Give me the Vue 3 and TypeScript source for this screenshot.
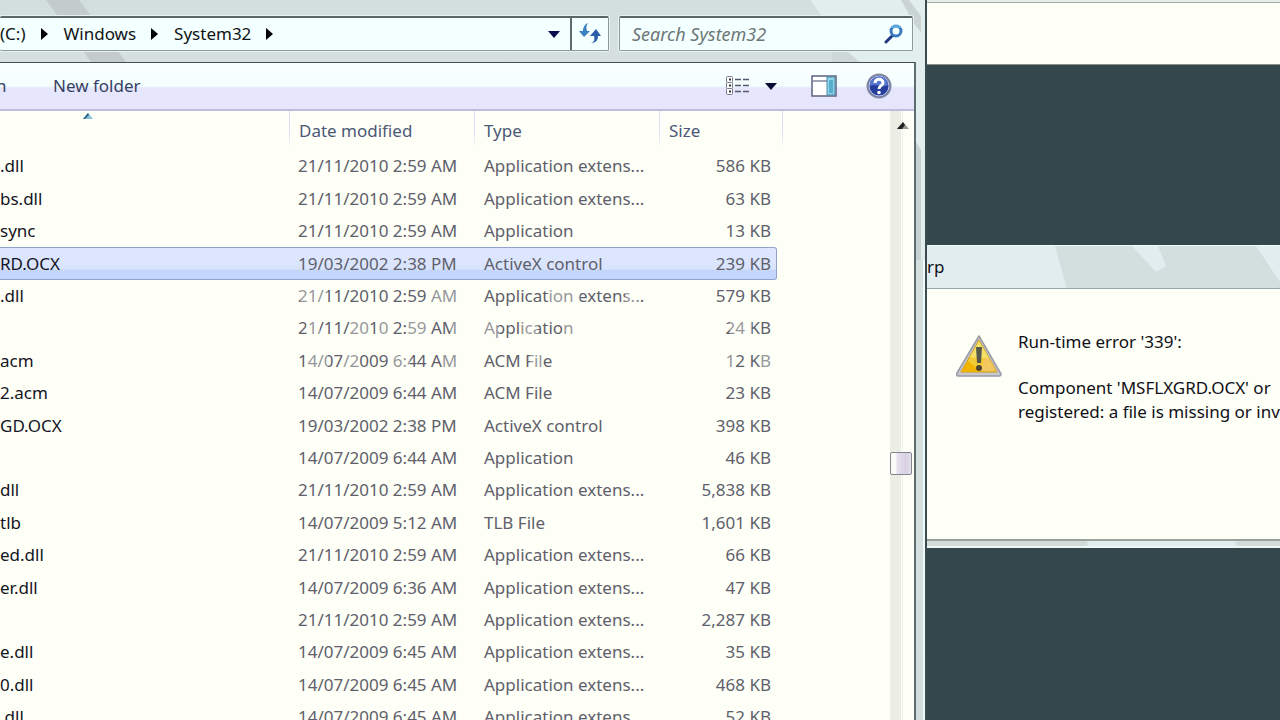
<script setup lang="ts">
interface FileRow {
  name: string
  date: string
  type: string
  size: string
  selected?: boolean
}

const ext = 'Application extens...'
const files: FileRow[] = [
  { name: '.dll', date: '21/11/2010 2:59 AM', type: ext, size: '586 KB' },
  { name: 'bs.dll', date: '21/11/2010 2:59 AM', type: ext, size: '63 KB' },
  { name: 'sync', date: '21/11/2010 2:59 AM', type: 'Application', size: '13 KB' },
  { name: 'RD.OCX', date: '19/03/2002 2:38 PM', type: 'ActiveX control', size: '239 KB', selected: true },
  { name: '.dll', date: '21/11/2010 2:59 AM', type: ext, size: '579 KB' },
  { name: '', date: '21/11/2010 2:59 AM', type: 'Application', size: '24 KB' },
  { name: 'acm', date: '14/07/2009 6:44 AM', type: 'ACM File', size: '12 KB' },
  { name: '2.acm', date: '14/07/2009 6:44 AM', type: 'ACM File', size: '23 KB' },
  { name: 'GD.OCX', date: '19/03/2002 2:38 PM', type: 'ActiveX control', size: '398 KB' },
  { name: '', date: '14/07/2009 6:44 AM', type: 'Application', size: '46 KB' },
  { name: 'dll', date: '21/11/2010 2:59 AM', type: ext, size: '5,838 KB' },
  { name: 'tlb', date: '14/07/2009 5:12 AM', type: 'TLB File', size: '1,601 KB' },
  { name: 'ed.dll', date: '21/11/2010 2:59 AM', type: ext, size: '66 KB' },
  { name: 'er.dll', date: '14/07/2009 6:36 AM', type: ext, size: '47 KB' },
  { name: '', date: '21/11/2010 2:59 AM', type: ext, size: '2,287 KB' },
  { name: 'e.dll', date: '14/07/2009 6:45 AM', type: ext, size: '35 KB' },
  { name: '0.dll', date: '14/07/2009 6:45 AM', type: ext, size: '468 KB' },
  { name: '.dll', date: '14/07/2009 6:45 AM', type: ext, size: '52 KB' },
]
</script>

<template>
  <div class="desktop">
    <main class="explorer">
      <svg class="glass left" width="180" height="62" aria-hidden="true">
        <path d="M46 0H79L126 62H91Z" fill="#c3cccb" />
      </svg>
      <svg class="glass right" width="115" height="260" aria-hidden="true">
        <path d="M0 0H115V260H103V62H50L34 51H22V16H12Z" fill="#e1eeed" />
        <path d="M91 0H99L111 16V32L105 25Z" fill="#c9d4d3" />
        <path d="M22 51H37L49 62H22Z" fill="#cdd8d7" />
        <path d="M103 137L111 150V260H103Z" fill="#c6d1d1" />
      </svg>

      <div class="nav">
        <div class="address">
          <nav class="crumbs" aria-label="Address">
            <a href="#">(C:)</a>
            <svg width="8" height="12"><path d="M0 0L7 6L0 12Z" fill="#000" /></svg>
            <a href="#">Windows</a>
            <svg width="8" height="12"><path d="M0 0L7 6L0 12Z" fill="#000" /></svg>
            <a href="#">System32</a>
            <svg width="8" height="12"><path d="M0 0L7 6L0 12Z" fill="#000" /></svg>
          </nav>
          <button class="icon-btn drop" aria-label="Previous locations">
            <svg width="12" height="7"><path d="M0 0H12L6 7Z" fill="#0a0a50" /></svg>
          </button>
          <button class="icon-btn refresh" aria-label="Refresh">
            <svg width="22" height="22" viewBox="0 0 22 22">
              <path d="M9 0C6 1 4 4 4 8H0L5 14L11 8H8C7 5 7 3 9 0Z" fill="#3b7fc4" />
              <path d="M12 20C15 19 16 17 15 13H11L17 6L22 13H19C19 17 17 20 12 20Z" fill="#2b5da8" />
            </svg>
          </button>
        </div>
        <div class="search">
          <input type="text" placeholder="Search System32" aria-label="Search System32" />
          <svg width="20" height="20" viewBox="0 0 20 20" aria-hidden="true">
            <path d="M8 12L2 18" stroke="#1e3a86" stroke-width="3" stroke-linecap="round" />
            <circle cx="12" cy="7" r="5" fill="#f4ffff" stroke="#3a78c0" stroke-width="3" />
            <path d="M8 4A5 5 0 0 1 16 4" fill="none" stroke="#5bb0dc" stroke-width="2" />
          </svg>
        </div>
      </div>

      <div class="frame">
        <div class="toolbar">
          <span class="cut">n</span>
          <button class="text-btn">New folder</button>
          <span class="grow"></span>
          <button class="icon-btn views" aria-label="Change your view">
            <svg width="24" height="20" viewBox="0 0 24 20">
              <g fill="#fff" stroke="#77798f">
                <rect x="1.500" y="0.500" width="6" height="6" rx="1" />
                <rect x="1.500" y="6.500" width="6" height="6" rx="1" />
                <rect x="1.500" y="12.500" width="6" height="6" rx="1" />
              </g>
              <path d="M4 3.500H6M4 9.500H6M4 15.500H6" stroke="#333" stroke-width="2" />
              <path d="M10 3.500H16M18 3.500H24M10 9.500H16M18 9.500H24M10 15.500H16M18 15.500H24" stroke="#55586c" stroke-width="1.500" />
            </svg>
          </button>
          <button class="icon-btn more" aria-label="More options">
            <svg width="12" height="7"><path d="M0 0H12L6 7Z" fill="#0b0b35" /></svg>
          </button>
          <button class="icon-btn pane" aria-label="Show the preview pane">
            <svg width="26" height="22" viewBox="0 0 26 22">
              <rect x="1" y="1" width="24" height="20" fill="#fff" stroke="#5b6280" stroke-width="1.500" />
              <path d="M1 6H16" stroke="#8084a0" stroke-width="1.500" />
              <rect x="16" y="2" width="8" height="18" fill="#8fd3ea" stroke="#4a8ba8" />
              <rect x="18" y="5" width="4" height="13" fill="#55aecb" />
            </svg>
          </button>
          <button class="icon-btn" aria-label="Get help">
            <svg width="26" height="26" viewBox="0 0 26 26">
              <circle cx="13" cy="13" r="11.500" fill="#263f9c" stroke="#8288a2" stroke-width="2" />
              <circle cx="13" cy="13" r="10" fill="none" stroke="#c5cdee" />
              <path d="M4 13A9 9 0 0 1 22 12C16 15 10 10 4 13Z" fill="#5878cf" />
              <path d="M9 10C9 5 17 5 17 10C17 13 13 12 13 16" fill="none" stroke="#fff" stroke-width="3" />
              <circle cx="13" cy="19.500" r="1.800" fill="#fff" />
            </svg>
          </button>
        </div>

        <div class="content">
          <div class="list">
            <svg class="sort" width="10" height="6" aria-hidden="true">
              <path d="M0 6L5 0L10 6Z" fill="#8cc3dc" /><path d="M0 6L5 0L6 2L2 6Z" fill="#2e5f84" />
            </svg>
            <table>
              <colgroup><col class="c-name" /><col class="c-mid" /><col class="c-mid" /><col class="c-size" /></colgroup>
              <thead>
                <tr>
                  <th aria-label="Name"></th>
                  <th>Date modified</th>
                  <th>Type</th>
                  <th class="last">Size</th>
                </tr>
              </thead>
              <tbody>
                <tr v-for="(f, i) in files" :key="i" :class="{ selected: f.selected }">
                  <td class="name">{{ f.name }}</td>
                  <td>{{ f.date }}</td>
                  <td>{{ f.type }}</td>
                  <td class="size">{{ f.size }}</td>
                </tr>
              </tbody>
            </table>
            <svg class="watermark" width="500" height="90" aria-hidden="true">
              <g fill="#fefff6" fill-opacity="0.35">
                <path d="M20 0H48V24H20ZM150 0H182V28H150ZM270 0H300V28H270ZM345 0H358V28H345Z" />
                <path d="M26 34H40V58H26ZM70 34H90V58H70ZM98 34H110V58H98ZM128 34H148V58H128ZM170 34H190V58H170ZM203 34H218V58H203ZM242 34H258V58H242ZM282 34H306V58H282ZM450 34H472V58H450Z" />
                <path d="M26 64H48V90H26ZM62 64H78V90H62ZM110 64H130V90H110ZM162 64H190V90H162ZM250 64H262V90H250ZM446 64H456V90H446ZM480 64H494V90H480Z" />
              </g>
            </svg>
          </div>
          <div class="scroll">
            <svg class="up" width="12" height="7" aria-hidden="true">
              <path d="M0 7L6 0L12 7Z" fill="#99998f" /><path d="M0 7L6 0L8 3L5 7Z" fill="#222" />
            </svg>
            <div class="thumb"></div>
          </div>
        </div>
      </div>
    </main>

    <aside class="behind">
      <div class="panel"></div>
      <section class="dialog">
        <header>
          <svg class="streaks" width="353" height="43" aria-hidden="true">
            <path d="M128 0H205L229 26L239 20L231 0H329L353 36V43H140Z" fill="#d3dfde" />
          </svg>
          <span>rp</span>
        </header>
        <div class="message">
          <svg width="48" height="44" viewBox="0 0 48 44" aria-hidden="true">
            <path d="M24 2L46 40Q46 42 44 42H3Q1 42 2 39Z" fill="#c8c8ce" stroke="#9a9aa6" stroke-width="1.500" stroke-linejoin="round" />
            <path d="M24 6L42 38H6Z" fill="#f2ca35" stroke="#c79a1c" />
            <path d="M24 7L15 23Q26 25 34 24Z" fill="#f5e06a" />
            <path d="M13 27L6 38H26Z" fill="#f0b400" />
            <path d="M30 25L25 37H41L34 24Z" fill="#f4c860" />
            <path d="M21 13H27L26 29H22Z" fill="#56584a" />
            <circle cx="24" cy="34" r="3" fill="#4c4630" />
          </svg>
          <div class="text">
            <p>Run-time error '339':</p>
            <p>Component 'MSFLXGRD.OCX' or<br />registered: a file is missing or inv</p>
          </div>
        </div>
        <footer></footer>
      </section>
    </aside>
  </div>
</template>

<style>
body {
  margin: 0;
}
</style>

<style scoped>
.desktop {
  display: grid;
  grid-template-columns: minmax(0, 927fr) minmax(0, 353fr);
  height: 100vh;
  overflow: hidden;
  background: #34474c;
  font-family: "Noto Sans", "Open Sans", sans-serif;
  font-size: 17px;
  line-height: 24px;
  color: #101018;
}
button {
  font: inherit;
  color: inherit;
  background: none;
  border: 0;
  padding: 0;
}
svg {
  display: block;
  flex: none;
}
.explorer {
  position: relative;
  display: flex;
  flex-direction: column;
  min-height: 0;
  box-sizing: border-box;
  padding: 16px 9px 0 0;
  border-right: 2px solid #3b4b4f;
  background: linear-gradient(#d2dedc, #d6e1df 60px, #d2dedd);
  box-shadow: inset -2px 0 #effbfb;
}
.glass {
  position: absolute;
  top: 0;
}
.glass.left {
  left: 0;
}
.glass.right {
  right: 0;
}
.nav {
  position: relative;
  display: flex;
  gap: 10px;
  height: 36px;
  margin-right: 3px;
}
.address,
.search {
  display: flex;
  box-sizing: border-box;
  height: 35px;
  border: 1px solid #8c9998;
  border-top: 2px solid #5a6565;
  border-radius: 2px;
  background: #f4ffff;
  box-shadow: 0 0 0 1px #e6f1f0;
}
.address {
  flex: 1;
  border-left: 0;
}
.search {
  flex: 0 0 32%;
  align-items: center;
  padding: 0 8px 0 12px;
}
.search input {
  flex: 1;
  min-width: 0;
  padding: 0;
  border: 0;
  background: none;
  font: italic 18px/24px "Noto Sans", "Open Sans", sans-serif;
}
.search input::placeholder {
  color: #6c7778;
  opacity: 1;
}
.crumbs {
  display: flex;
  flex: 1;
  align-items: center;
  gap: 15px;
}
.crumbs a {
  color: #101414;
  text-decoration: none;
}
.icon-btn {
  display: flex;
  align-items: center;
  justify-content: center;
}
.drop {
  width: 32px;
}
.refresh {
  width: 38px;
  border-left: 2px solid #5f6a6c;
}
.frame {
  position: relative;
  display: flex;
  flex-direction: column;
  flex: 1;
  min-height: 0;
  margin-top: 10px;
  border-top: 1px solid #46504f;
  border-right: 2px solid #5d6c6e;
  background: #fefff6;
}
.toolbar {
  display: flex;
  align-items: center;
  flex: none;
  height: 46px;
  padding-right: 22px;
  border-bottom: 2px solid #bdbedb;
  background: linear-gradient(#fbffff, #f3feff 50%, #e6e7fd 54%, #e5e5fc);
  color: #36405f;
}
.cut {
  width: 53px;
  text-indent: -4px;
}
.grow {
  flex: 1;
}
.more {
  margin: 0 34px 0 16px;
}
.pane {
  margin-right: 29px;
}
.content {
  display: flex;
  flex: 1;
  min-height: 0;
}
.list {
  position: relative;
  flex: 1;
  min-width: 0;
  overflow: hidden;
}
.sort {
  position: absolute;
  left: 83px;
  top: 2px;
}
.watermark {
  position: absolute;
  left: 280px;
  top: 173px;
  pointer-events: none;
}
table {
  width: 777px;
  table-layout: fixed;
  border-spacing: 0;
}
.c-name {
  width: 289px;
}
.c-mid {
  width: 185px;
}
.c-size {
  width: 118px;
}
th {
  position: relative;
  height: 39px;
  padding: 0 0 0 10px;
  font-weight: 400;
  text-align: left;
  color: #4c5878;
}
th + th::before,
th.last::after {
  content: "";
  position: absolute;
  top: 0;
  left: 0;
  width: 1px;
  height: 34px;
  background: linear-gradient(#e3d8f8 60%, #f6f6fb);
}
th.last::after {
  left: 123px;
}
td {
  height: 32px;
  padding: 0 0 0 9px;
  box-sizing: border-box;
  white-space: nowrap;
  color: #5f606c;
}
td:nth-child(3) {
  padding-left: 10px;
}
tr:nth-child(5n + 2) td,
tr:nth-child(5n + 4) td {
  height: 33px;
}
td.name {
  padding-left: 0;
  color: #14141f;
}
td.size {
  padding: 0 6px 0 0;
  text-align: right;
}
.selected td {
  border: 1px solid #8fa2cd;
  border-width: 1px 0;
  background: linear-gradient(#dfe7fe, #d9e4fd 68%, #c5d6fb 72%, #c3d5fb);
}
.selected td.size {
  padding-right: 5px;
  border-right-width: 1px;
  border-radius: 0 3px 3px 0;
}
.scroll {
  position: relative;
  flex: none;
  width: 24px;
  background: linear-gradient(90deg, #eceee6 11px, #fcfdf6 11px, #fcfdf6 12px, #f0f1ea 12px, #f0f1ea 13px, #fefff6 13px);
}
.up {
  margin: 11px 0 0 7px;
}
.thumb {
  position: absolute;
  top: 341px;
  left: 0;
  box-sizing: border-box;
  width: 22px;
  height: 23px;
  border: 1px solid #85858f;
  border-radius: 2px;
  background: linear-gradient(90deg, #fbfbf8 25%, #e6e0ee 30%, #d9d0e4 75%, #e6e2ec);
}
.behind {
  display: flex;
  flex-direction: column;
  min-width: 0;
}
.panel {
  height: 65px;
  flex: none;
  box-sizing: border-box;
  margin-bottom: 180px;
  border-top: 2px solid #e9efe8;
  border-bottom: 1px solid #8b9084;
  background: #fefff6;
  box-shadow: inset 0 1px #a5aaa5;
}
.dialog {
  display: flex;
  flex-direction: column;
  background: #fefff6;
}
.dialog header {
  position: relative;
  display: flex;
  align-items: center;
  height: 42px;
  overflow: hidden;
  border-top: 1px solid #f0f8f8;
  border-bottom: 1px solid #98a7aa;
  background: #e1edee;
}
.dialog header span {
  position: relative;
}
.streaks {
  position: absolute;
  top: 0;
  left: 0;
}
.message {
  display: flex;
  gap: 15px;
  min-height: 209px;
  padding: 41px 0 0 28px;
}
.message svg {
  margin-top: 4px;
}
.text {
  white-space: nowrap;
}
p {
  margin: 0 0 22px;
}
.dialog footer {
  height: 5px;
  border-top: 2px solid #9b9f9d;
  border-bottom: 2px solid #edf7f5;
  background: linear-gradient(90deg, #d1dcdb 45%, #e2eeee 46%, #e2eeee 87%, #d1dcdb 88%);
}
</style>
